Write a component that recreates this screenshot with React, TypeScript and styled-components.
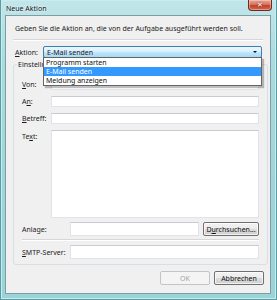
import React from "react";
import styled, { createGlobalStyle } from "styled-components";

const Global = createGlobalStyle`
  html, body { margin: 0; padding: 0; }
  body {
    width: 277px; height: 300px; overflow: hidden;
    font-family: "Noto Sans", "Liberation Sans", sans-serif;
    font-size: 7px; color: #1b1b1b;
  }
  * { box-sizing: border-box; }
`;

const Window = styled.div`
  width: 277px;
  height: 300px;
  display: flex;
  flex-direction: column;
  padding: 0 5px 5px 4px;
  background: linear-gradient(180deg, #c2e6ea 0%, #a9dbe0 20%, #9fd5da 60%, #9bd3d8 100%);
  border: 1px solid #5a9ca2;
  border-top: none;
  box-shadow: inset 0 0 0 1px #c9ecef;
`;

const TitleBar = styled.div`
  height: 15px;
  flex: none;
  display: flex;
  align-items: flex-start;
  justify-content: space-between;
`;

const Title = styled.div`
  padding: 4px 0 0 1px;
  font-size: 7px;
  line-height: 9px;
  color: #111;
  text-shadow: 0 0 3px #e8f7f9, 0 0 2px #e8f7f9;
`;

const CloseBtn = styled.div`
  width: 24px;
  height: 11px;
  margin-right: -1px;
  display: flex;
  align-items: center;
  justify-content: center;
  border: 1px solid #6b2a1c;
  border-top: none;
  border-radius: 0 0 4px 4px;
  background: linear-gradient(180deg, #e9a899 0%, #d6735f 45%, #c4412a 55%, #d0644b 100%);
  box-shadow: inset 0 0 0 1px rgba(255, 210, 200, 0.5);
  color: #fff;
  font-family: "DejaVu Sans", sans-serif;
  font-size: 7px;
  font-weight: bold;
  line-height: 1;
  text-shadow: 0 0 2px #5a1a10;
`;

const Client = styled.div`
  flex: 1;
  display: flex;
  flex-direction: column;
  background: #f0f0f0;
  border: 1px solid #7d9ea3;
  position: relative;
`;

const Instruction = styled.div`
  margin: 8px 0 0 9px;
  line-height: 9px;
  height: 9px;
  white-space: nowrap;
`;

const Etched = styled.div<{ $ml: number; $w: number; $mt: number }>`
  margin-top: ${(p) => p.$mt}px;
  margin-left: ${(p) => p.$ml}px;
  width: ${(p) => p.$w}px;
  height: 2px;
  border-top: 1px solid #d7d7d7;
  border-bottom: 1px solid #ffffff;
  flex: none;
`;

const ActionRow = styled.div`
  margin-top: 5px;
  height: 12px;
  display: flex;
  align-items: center;
  padding-left: 9px;
  position: relative;
  z-index: 2;
`;

const Label = styled.div<{ $w: number }>`
  width: ${(p) => p.$w}px;
  flex: none;
  line-height: 9px;
  white-space: nowrap;
`;

const Key = styled.span`
  text-decoration: underline;
  text-underline-offset: 1px;
`;

const Combo = styled.div`
  position: relative;
  width: 219px;
  height: 12px;
  border: 1px solid #3c7fb1;
  border-radius: 2px;
  background: linear-gradient(180deg, #eaf6fd 0%, #d9f0fc 45%, #bee6fd 55%, #a7d9f5 100%);
  display: flex;
  align-items: center;
  padding-left: 3px;
  line-height: 9px;
`;

const Arrow = styled.div`
  position: absolute;
  right: 4px;
  top: 4px;
  width: 0;
  height: 0;
  border-left: 2px solid transparent;
  border-right: 2px solid transparent;
  border-top: 2px solid #111;
`;

const DropList = styled.div`
  position: absolute;
  left: -1px;
  top: 10px;
  width: 219px;
  border: 1px solid #646464;
  background: #fff;
  box-shadow: 2px 2px 1px rgba(0, 0, 0, 0.25);
  padding: 0;
`;

const DropItem = styled.div<{ $sel?: boolean }>`
  height: 9px;
  line-height: 9px;
  padding-left: 2px;
  background: ${(p) => (p.$sel ? "#3399ff" : "transparent")};
  color: ${(p) => (p.$sel ? "#fff" : "#111")};
  white-space: nowrap;
`;

const Group = styled.div`
  position: relative;
  margin: 6px 0 0 7px;
  width: 255px;
  height: 201px;
  border: 1px solid #d5dfe5;
  border-radius: 3px;
  display: flex;
  flex-direction: column;
  padding: 13px 8px 0 8px;
`;

const Legend = styled.div`
  position: absolute;
  left: 3px;
  top: -5px;
  padding: 0 1px;
  background: #f0f0f0;
  line-height: 9px;
  white-space: nowrap;
`;

const Row = styled.div<{ $mt: number; $h: number }>`
  margin-top: ${(p) => p.$mt}px;
  height: ${(p) => p.$h}px;
  display: flex;
  align-items: ${(p) => (p.$h > 20 ? "flex-start" : "center")};
  flex: none;
`;

const Field = styled.div<{ $h: number }>`
  flex: 1;
  height: ${(p) => p.$h}px;
  background: #fff;
  border: 1px solid #e2e3ea;
  border-top-color: #c9cbd2;
`;

const Button = styled.div<{ $disabled?: boolean; $w: number }>`
  width: ${(p) => p.$w}px;
  height: 14px;
  flex: none;
  display: flex;
  align-items: center;
  justify-content: center;
  border: 1px solid ${(p) => (p.$disabled ? "#c2c5c8" : "#707070")};
  border-radius: 2px;
  background: ${(p) =>
    p.$disabled
      ? "#f4f4f4"
      : "linear-gradient(180deg, #f2f2f2 0%, #ebebeb 50%, #dddddd 51%, #cfcfcf 100%)"};
  box-shadow: ${(p) => (p.$disabled ? "none" : "inset 0 0 0 1px rgba(255,255,255,0.7)")};
  color: ${(p) => (p.$disabled ? "#a3a3a3" : "#111")};
  line-height: 9px;
  white-space: nowrap;
`;

const Footer = styled.div`
  margin-top: 6px;
  display: flex;
  justify-content: flex-end;
  gap: 4px;
  padding-right: 6px;
`;

export default function App() {
  return (
    <>
      <Global />
      <Window>
        <TitleBar>
          <Title>Neue Aktion</Title>
          <CloseBtn>✕</CloseBtn>
        </TitleBar>
        <Client>
          <Instruction>Geben Sie die Aktion an, die von der Aufgabe ausgeführt werden soll.</Instruction>
          <Etched $mt={6} $ml={7} $w={250} />
          <ActionRow>
            <Label $w={28}>
              <Key>A</Key>ktion:
            </Label>
            <Combo>
              E-Mail senden
              <Arrow />
              <DropList>
                <DropItem>Programm starten</DropItem>
                <DropItem $sel>E-Mail senden</DropItem>
                <DropItem>Meldung anzeigen</DropItem>
              </DropList>
            </Combo>
          </ActionRow>
          <Group>
            <Legend>Einstellungen</Legend>
            <Row $mt={1} $h={11}>
              <Label $w={29}>
                <Key>V</Key>on:
              </Label>
              <Field $h={11} />
            </Row>
            <Row $mt={6} $h={11}>
              <Label $w={29}>
                A<Key>n</Key>:
              </Label>
              <Field $h={11} />
            </Row>
            <Row $mt={6} $h={11}>
              <Label $w={29}>
                <Key>B</Key>etreff:
              </Label>
              <Field $h={11} />
            </Row>
            <Row $mt={6} $h={88}>
              <Label $w={29} style={{ marginTop: 2 }}>
                Te<Key>x</Key>t:
              </Label>
              <Field $h={88} />
            </Row>
            <Row $mt={4} $h={14}>
              <Label $w={48}>
                Anla<Key>g</Key>e:
              </Label>
              <Field $h={14} />
              <Button $w={56} style={{ marginLeft: 4 }}>
                D<Key>u</Key>rchsuchen...
              </Button>
            </Row>
            <Etched $mt={3} $ml={0} $w={237} />
            <Row $mt={4} $h={14}>
              <Label $w={48}>
                <Key>S</Key>MTP-Server:
              </Label>
              <Field $h={14} />
            </Row>
          </Group>
          <Footer>
            <Button $w={50} $disabled>
              OK
            </Button>
            <Button $w={50}>Abbrechen</Button>
          </Footer>
        </Client>
      </Window>
    </>
  );
}
